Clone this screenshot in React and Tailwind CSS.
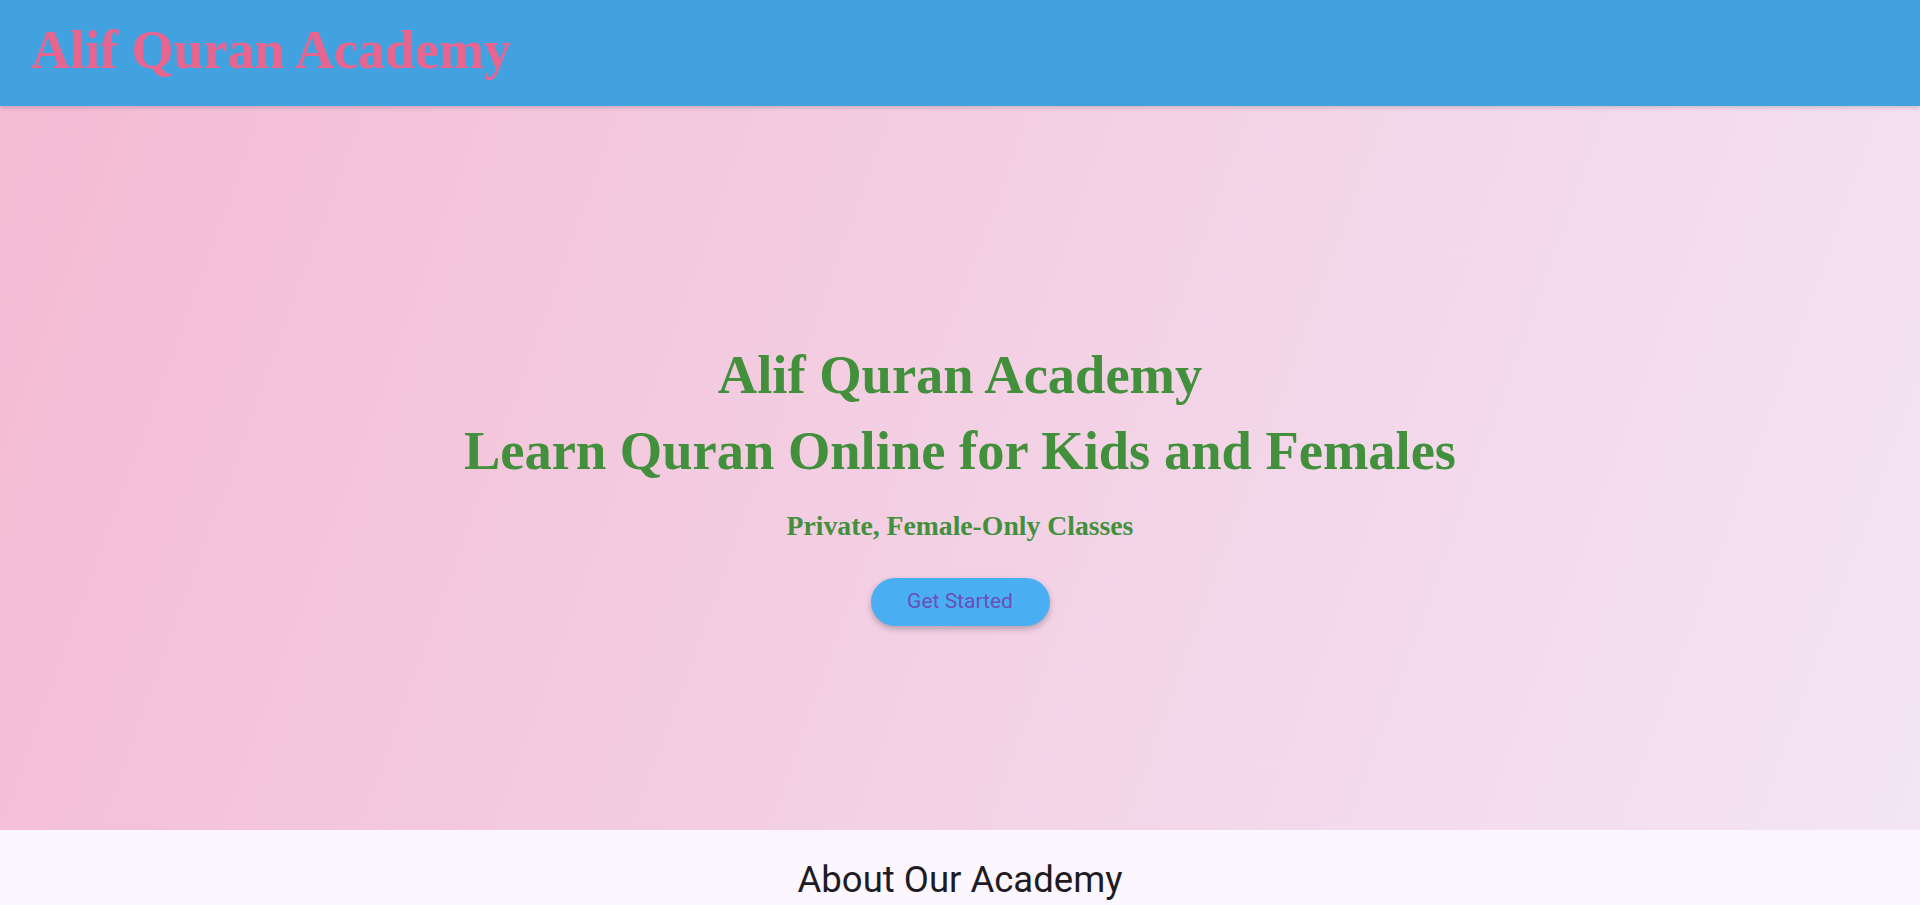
export default function App() {
  return (
    <div className="min-h-screen bg-[#fcf6fe]">
      <header className="relative z-10 flex h-[106px] items-center bg-[#42a2e0] pb-[6px] pl-[31px] pr-[28px] shadow-[0_2px_4px_rgba(0,0,0,0.15)]">
        <h1 className="font-['Liberation_Serif','Times_New_Roman',serif] text-[54px] font-bold leading-none text-[#e8658f]">
          Alif Quran Academy
        </h1>
      </header>
      <section className="flex h-[724px] flex-col items-center justify-center bg-[linear-gradient(110deg,#f4bbd3,#f3e5f5)] pt-[26px] text-center">
        <h2 className="font-['Liberation_Serif','Times_New_Roman',serif] text-[54.5px] font-bold leading-[76px] text-[#42903b]">
          Alif Quran Academy
          <br />
          Learn Quran Online for Kids and Females
        </h2>
        <p className="mt-[19px] font-['Liberation_Serif','Times_New_Roman',serif] text-[27.7px] font-bold leading-[36px] text-[#42903b]">
          Private, Female-Only Classes
        </p>
        <button className="mt-[34px] h-[48px] w-[179px] rounded-full bg-[#4aaff2] font-['Roboto','Liberation_Sans',sans-serif] text-[21px] text-[#6a4fb8] shadow-[0_3px_6px_rgba(0,0,0,0.25)]">
          Get Started
        </button>
      </section>
      <section className="bg-[#fcf6fe] pb-[40px] pt-[30px] text-center">
        <h2 className="font-['Roboto','Liberation_Sans',sans-serif] text-[36.5px] leading-[40px] text-[#1e1b22]">
          About Our Academy
        </h2>
      </section>
    </div>
  );
}
